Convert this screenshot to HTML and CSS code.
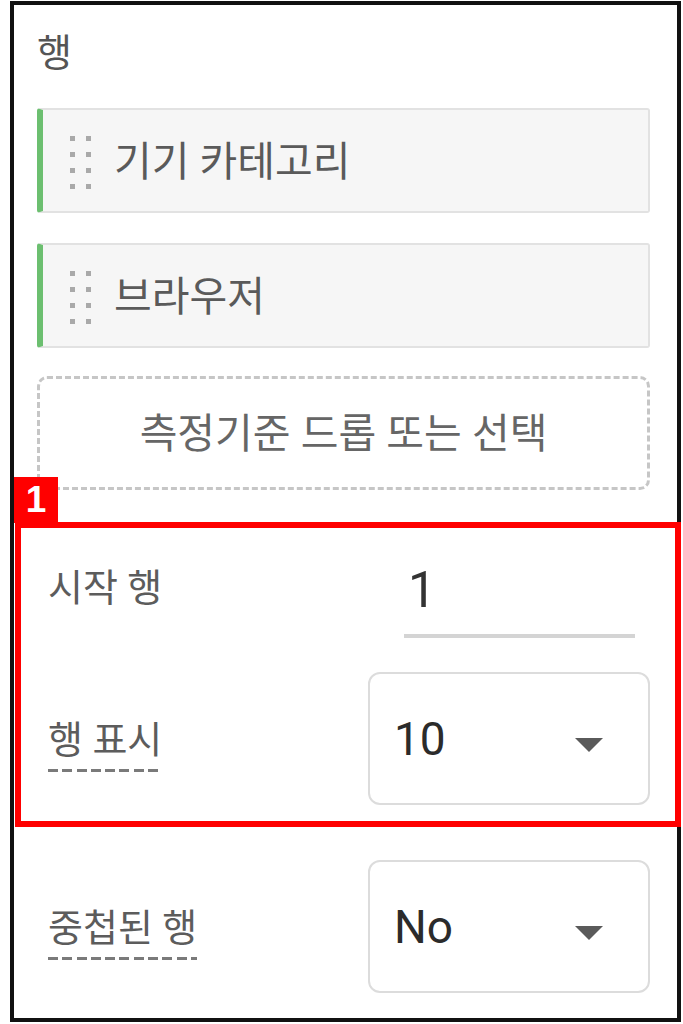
FILE: index.html
```html
<!DOCTYPE html>
<html lang="ko">
<head>
<meta charset="utf-8">
<title>행 설정</title>
<link rel="stylesheet" href="styles.css">
</head>
<body>
<div class="page">
  <div class="frame">
    <div class="section-title">행</div>

    <div class="chip">
      <svg class="grip" width="22" height="55" viewBox="0 0 22 55" aria-hidden="true">
        <rect x="0" y="0" width="5" height="5"/><rect x="16" y="0" width="5" height="5"/>
        <rect x="0" y="16" width="5" height="5"/><rect x="16" y="16" width="5" height="5"/>
        <rect x="0" y="32" width="5" height="5"/><rect x="16" y="32" width="5" height="5"/>
        <rect x="0" y="48" width="5" height="5"/><rect x="16" y="48" width="5" height="5"/>
      </svg>
      <span class="chip-label">기기 카테고리</span>
    </div>

    <div class="chip chip-gap">
      <svg class="grip" width="22" height="55" viewBox="0 0 22 55" aria-hidden="true">
        <rect x="0" y="0" width="5" height="5"/><rect x="16" y="0" width="5" height="5"/>
        <rect x="0" y="16" width="5" height="5"/><rect x="16" y="16" width="5" height="5"/>
        <rect x="0" y="32" width="5" height="5"/><rect x="16" y="32" width="5" height="5"/>
        <rect x="0" y="48" width="5" height="5"/><rect x="16" y="48" width="5" height="5"/>
      </svg>
      <span class="chip-label">브라우저</span>
    </div>

    <div class="dropzone">측정기준 드롭 또는 선택</div>

    <div class="form">
      <div class="row row-start">
        <span class="label">시작 행</span>
        <div class="input">1</div>
      </div>
      <div class="row row-select">
        <span class="label dashed">행 표시</span>
        <div class="select">
          <span class="value">10</span>
          <svg class="caret" width="28" height="14" viewBox="0 0 28 14" aria-hidden="true"><polygon points="0,0 28,0 14,14"/></svg>
        </div>
      </div>
      <div class="row row-select row-last">
        <span class="label dashed">중첩된 행</span>
        <div class="select">
          <span class="value">No</span>
          <svg class="caret" width="28" height="14" viewBox="0 0 28 14" aria-hidden="true"><polygon points="0,0 28,0 14,14"/></svg>
        </div>
      </div>
    </div>
  </div>

  <div class="annot-box"></div>
  <div class="annot-badge">1</div>
</div>
</body>
</html>
```

FILE: styles.css
```css
* { box-sizing: border-box; }

html, body {
  margin: 0;
  padding: 0;
  background: #ffffff;
}

body {
  font-family: Roboto, "Noto Sans CJK KR", sans-serif;
  color: #5a5a5a;
}

.page {
  position: relative;
  width: 683px;
  height: 1024px;
  overflow: hidden;
}

.frame {
  margin: 1px 0 0 10px;
  width: 671px;
  height: 1021px;
  border: 4px solid #111111;
  padding: 29px 27px 0 23px;
}

.section-title {
  font-size: 38px;
  line-height: 38px;
  color: #555555;
  margin-left: 0;
  margin-bottom: 36px;
}

.chip {
  display: flex;
  align-items: center;
  height: 105px;
  background: #f6f6f6;
  border: 2px solid #e2e2e2;
  border-left: 6px solid #6cbf70;
  border-radius: 3px;
  padding-left: 27px;
}

.chip-gap {
  margin-top: 30px;
}

.grip {
  fill: #a9a9a9;
  margin-top: 6px;
  flex: none;
}

.chip-label {
  margin-left: 22px;
  margin-top: 4px;
  font-size: 41px;
  line-height: 41px;
  color: #5a5a5a;
}

.dropzone {
  margin-top: 28px;
  height: 114px;
  border: 3px dashed #c6c6c6;
  border-radius: 10px;
  display: flex;
  align-items: center;
  justify-content: center;
  font-size: 41px;
  line-height: 41px;
  color: #666666;
  padding-left: 0;
  padding-top: 2px;
}

.form {
  margin-top: 71px;
}

.row {
  display: flex;
  justify-content: space-between;
  padding-left: 11px;
}

.row-start {
  align-items: flex-start;
}

.row-start .label {
  margin-top: 9px;
}

.row-select {
  align-items: center;
  margin-top: 34px;
}

.row-last {
  margin-top: 55px;
}

.label {
  font-size: 38px;
  line-height: 36px;
  color: #5c5c5c;
}

.label.dashed {
  padding-bottom: 14px;
  margin-top: 16px;
  background: repeating-linear-gradient(90deg, #7a7a7a 0 10px, transparent 10px 14.3px) left bottom / 100% 3px no-repeat;
}

.input {
  width: 231px;
  margin-right: 15px;
  font-size: 50px;
  line-height: 58px;
  padding: 0 0 15px 4px;
  border-bottom: 4px solid #d4d4d4;
  color: #333333;
}

.select {
  width: 282px;
  height: 133px;
  border: 2px solid #dcdcdc;
  border-radius: 12px;
  display: flex;
  align-items: center;
  justify-content: space-between;
  padding: 0 45px 0 24px;
}

.value {
  font-size: 46px;
  line-height: 46px;
  color: #2b2b2b;
}

.caret {
  fill: #5a5a5a;
  margin-top: 12px;
}

.annot-box {
  position: absolute;
  left: 15px;
  top: 522px;
  width: 666px;
  height: 305px;
  border: 6px solid #ff0000;
  pointer-events: none;
}

.annot-badge {
  position: absolute;
  left: 14px;
  top: 477px;
  width: 44px;
  height: 46px;
  background: #ff0000;
  color: #ffffff;
  font-family: "Liberation Sans", Arial, sans-serif;
  font-weight: 700;
  font-size: 37px;
  line-height: 46px;
  text-align: center;
}
```
